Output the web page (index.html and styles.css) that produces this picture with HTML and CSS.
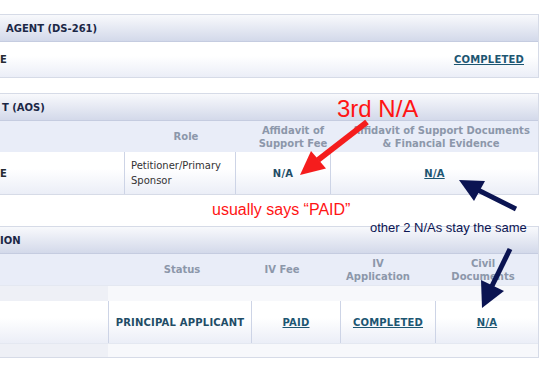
FILE: index.html
```html
<!DOCTYPE html>
<html lang="en">
<head>
    <meta charset="UTF-8">
    <title>Case Status</title>
    <link rel="stylesheet" href="styles.css">
</head>
<body>

<div class="page">

    <div class="panel panel-agent">
        <div class="panel-head head-agent">AGENT (DS-261)</div>
        <div class="row row-single">
            <span class="strong">E</span>
            <a href="#" class="status-link">COMPLETED</a>
        </div>
    </div>

    <div class="panel panel-aos">
        <div class="panel-head head-aos">T (AOS)</div>
        <div class="col-head aos-cols">
            <div></div>
            <div>Role</div>
            <div>Affidavit of<br>Support Fee</div>
            <div>Affidavit of Support Documents<br>&amp; Financial Evidence</div>
        </div>
        <div class="row aos-row">
            <div class="cell"><span class="strong">E</span></div>
            <div class="cell cell-text">Petitioner/Primary<br>Sponsor</div>
            <div class="cell"><span class="status-plain">N/A</span></div>
            <div class="cell"><a href="#" class="status-link">N/A</a></div>
        </div>
    </div>

    <div class="panel panel-iv">
        <div class="panel-head head-iv">ION</div>
        <div class="col-head iv-cols">
            <div></div>
            <div>Status</div>
            <div>IV Fee</div>
            <div>IV<br>Application</div>
            <div>Civil<br>Documents</div>
            <div></div>
        </div>
        <div class="band"><div></div><div></div></div>
        <div class="row iv-row">
            <div class="cell"></div>
            <div class="cell"><span class="status-plain">PRINCIPAL APPLICANT</span></div>
            <div class="cell"><a href="#" class="status-link">PAID</a></div>
            <div class="cell"><a href="#" class="status-link">COMPLETED</a></div>
            <div class="cell"><a href="#" class="status-link">N/A</a></div>
        </div>
        <div class="band"><div></div><div></div></div>
    </div>

</div>

<!-- annotations drawn over the screenshot -->
<svg class="notes" width="546" height="365" viewBox="0 0 546 365">
    <text class="note-red note-big" x="337" y="117">3rd N/A</text>
    <line x1="367" y1="122" x2="318" y2="160" stroke="#f51d1d" stroke-width="6"/>
    <polygon points="300,175 326,168.5 311,151" fill="#f51d1d"/>

    <text class="note-red note-mid" x="212" y="215">usually says “PAID”</text>

    <text class="note-navy" x="370" y="232">other 2 N/As stay the same</text>
    <line x1="516" y1="209" x2="478" y2="190" stroke="#0b1452" stroke-width="5"/>
    <polygon points="459,180 485,181 474,201" fill="#0b1452"/>
    <line x1="510" y1="249" x2="492" y2="286" stroke="#0b1452" stroke-width="5"/>
    <polygon points="482,308 504,291 481,280" fill="#0b1452"/>
</svg>

</body>
</html>
```

FILE: styles.css
```css
body {
    margin: 0;
    background-color: #fff;
    font-family: "DejaVu Sans", Verdana, sans-serif;
    font-size: 10px;
    width: 546px;
    height: 365px;
    overflow: hidden;
    position: relative;
}
.page {
    padding-top: 14px;
}
.panel {
    width: 540px;
    margin-left: -1px;
    box-sizing: border-box;
    border: 1px solid #d6dbe7;
    background-color: #fff;
}
.panel-aos {
    margin-top: 15px;
}
.panel-iv {
    margin-top: 31px;
}
.panel-head {
    height: 26px;
    display: flex;
    align-items: center;
    background: linear-gradient(#f8f9fc, #d3d9ea);
    border-bottom: 1px solid #c5cce0;
    font-weight: bold;
    color: #1b2746;
    white-space: nowrap;
}
/* the left side of the table is outside the crop */
.head-agent { padding-left: 6px; }
.head-aos { padding-left: 2px; }
.head-iv { padding-left: 0; }

.strong {
    font-weight: bold;
    color: #262a33;
}
.row {
    background: linear-gradient(#fff 40%, #ebeef7);
}
.row-single {
    height: 35px;
    display: flex;
    align-items: center;
    justify-content: space-between;
    padding-right: 14px;
}
.status-link {
    font-weight: bold;
    color: #1d5672;
    letter-spacing: 0.2px;
}
.status-plain {
    font-weight: bold;
    color: #1f4c66;
    letter-spacing: 0.2px;
}
.col-head {
    display: grid;
    height: 31px;
    align-items: center;
    background-color: #e9edf8;
    color: #8c97aa;
    font-weight: bold;
    line-height: 13px;
    text-align: center;
}
.aos-cols {
    grid-template-columns: 130px 112px 102px 1fr;
}
.iv-cols {
    grid-template-columns: 120px 124px 76px 116px 94px 1fr;
}
.aos-row, .iv-row {
    display: grid;
    height: 42px;
}
.aos-row {
    grid-template-columns: 124px 111px 95px 1fr;
}
.iv-row {
    grid-template-columns: 108px 143px 89px 95px 1fr;
}
.cell {
    display: flex;
    align-items: center;
    justify-content: center;
}
.cell + .cell {
    border-left: 1px solid #cdd4e6;
}
.aos-row .cell:first-child {
    justify-content: flex-start;
}
.cell-text {
    justify-content: flex-start;
    padding-left: 6px;
    color: #333;
    line-height: 15px;
}
.band {
    display: grid;
    grid-template-columns: 108px 1fr;
    height: 15px;
    border-top: 1px solid #e4e8f1;
}
.band div:first-child {
    background-color: #eef0f6;
}
.band div:last-child {
    background-color: #f7f8fb;
}
.iv-row + .band {
    height: 13px;
}

/* annotations */
.notes {
    position: absolute;
    top: 0;
    left: 0;
    pointer-events: none;
}
.note-red {
    fill: #ff1414;
    font-family: "Liberation Sans", Arial, sans-serif;
}
.note-big {
    font-size: 24px;
}
.note-mid {
    font-size: 16px;
}
.note-navy {
    fill: #0b1452;
    font-family: "Liberation Sans", Arial, sans-serif;
    font-size: 13px;
}
```
